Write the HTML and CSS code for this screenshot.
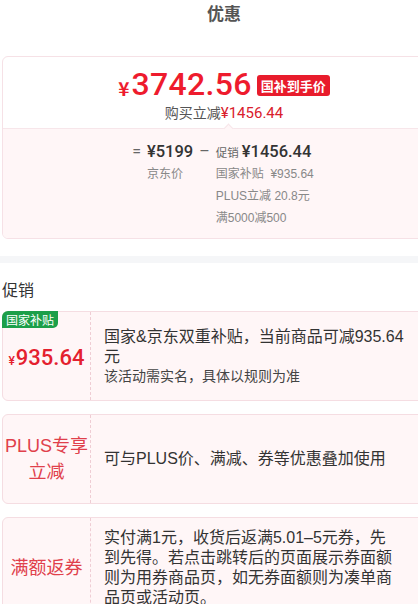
FILE: index.html
```html
<!DOCTYPE html>
<html lang="zh-CN">
<head>
<meta charset="utf-8">
<title>优惠</title>
<link rel="stylesheet" href="styles.css">
</head>
<body>
<div class="page">
  <div class="header">优惠</div>

  <div class="price-card">
    <div class="summary">
      <div class="final">
        <span class="yen">¥</span><span class="final-num">3742.56</span><span class="final-badge">国补到手价</span>
      </div>
      <div class="saving">购买立减<span class="saving-num">¥1456.44</span></div>
    </div>
    <div class="breakdown">
      <div class="calc">
        <span class="op">=</span>
        <div class="term">
          <div class="amount">¥5199</div>
          <div class="note">京东价</div>
        </div>
        <span class="op">–</span>
        <div class="term">
          <div class="amount"><span class="amount-tag">促销</span>¥1456.44</div>
          <div class="note">国家补贴&nbsp;&nbsp;¥935.64</div>
          <div class="note">PLUS立减 20.8元</div>
          <div class="note">满5000减500</div>
        </div>
      </div>
    </div>
  </div>

  <div class="divider"></div>

  <div class="section-title">促销</div>

  <div class="promo">
    <span class="promo-badge">国家补贴</span>
    <div class="promo-left">
      <span class="promo-price"><span class="promo-yen">¥</span>935.64</span>
    </div>
    <div class="promo-right">
      <div class="promo-text">国家&amp;京东双重补贴，当前商品可减935.64<br>元</div>
      <div class="promo-sub">该活动需实名，具体以规则为准</div>
    </div>
  </div>

  <div class="promo">
    <div class="promo-left">
      <span class="promo-label">PLUS专享<br>立减</span>
    </div>
    <div class="promo-right">
      <div class="promo-text">可与PLUS价、满减、券等优惠叠加使用</div>
    </div>
  </div>

  <div class="promo">
    <div class="promo-left">
      <span class="promo-label">满额返券</span>
    </div>
    <div class="promo-right">
      <div class="promo-text">实付满1元，收货后返满5.01–5元券，先<br>到先得。若点击跳转后的页面展示券面额<br>则为用券商品页，如无券面额则为凑单商<br>品页或活动页。</div>
    </div>
  </div>
</div>
</body>
</html>
```

FILE: styles.css
```css
html, body {
  margin: 0;
  padding: 0;
  background: #fff;
  overflow: hidden;
}

body {
  font-family: "Liberation Sans", "Noto Sans CJK SC", sans-serif;
  color: #333;
}

.page {
  width: 448px;
}

.header {
  height: 30px;
  line-height: 30px;
  text-align: center;
  font-size: 17px;
  font-weight: 700;
  color: #555;
}

.price-card {
  margin: 26px 2px 0;
  border: 1px solid #f6e1e6;
  border-radius: 6px;
  overflow: hidden;
}

.summary {
  padding: 9px 0 6px;
  text-align: center;
}

.final {
  height: 36px;
  display: flex;
  justify-content: center;
  align-items: center;
  color: #ee1b2d;
}

.yen {
  font-family: "Noto Sans CJK SC", sans-serif;
  font-size: 19px;
  font-weight: 700;
  margin-top: 6px;
  margin-right: 2px;
}

.final-num {
  font-family: Roboto, "Noto Sans", sans-serif;
  font-size: 32px;
  font-weight: 500;
  letter-spacing: 0.3px;
}

.final-badge {
  margin-left: 5px;
  margin-top: 3px;
  padding: 0 4px;
  height: 21px;
  line-height: 21px;
  border-radius: 3px;
  background: #e81c2c;
  color: #fff;
  font-family: "Noto Sans CJK SC", sans-serif;
  font-size: 13px;
  font-weight: 700;
}

.saving {
  height: 20px;
  line-height: 20px;
  font-family: "Noto Sans CJK SC", sans-serif;
  font-size: 14px;
  color: #555;
}

.saving-num {
  font-family: Roboto, sans-serif;
  color: #d9202c;
  font-size: 15px;
}

.breakdown {
  position: relative;
  background: #fff6f7;
  border-top: 1px solid #f7e6ea;
  padding: 12px 0 9px;
}

.breakdown::before {
  content: "";
  position: absolute;
  top: -4px;
  left: 222px;
  width: 6px;
  height: 6px;
  background: #fff6f7;
  border-top: 1px solid #f7e6ea;
  border-left: 1px solid #f7e6ea;
  transform: rotate(45deg);
}

.calc {
  display: flex;
  justify-content: center;
  align-items: flex-start;
  gap: 6px;
  padding-right: 2px;
}

.op {
  height: 22px;
  line-height: 22px;
  font-family: Roboto, sans-serif;
  font-size: 16px;
  color: #666;
}

.amount {
  height: 22px;
  line-height: 22px;
  font-family: Roboto, sans-serif;
  font-size: 16.5px;
  font-weight: 500;
  color: #333;
  white-space: nowrap;
}

.amount-tag {
  font-family: "Noto Sans CJK SC", sans-serif;
  font-size: 11.5px;
  font-weight: 400;
  color: #666;
  margin-right: 3px;
}

.note {
  height: 22px;
  line-height: 22px;
  font-family: "Liberation Sans", "Noto Sans CJK SC", sans-serif;
  font-size: 12px;
  color: #888;
  white-space: nowrap;
}

.divider {
  margin-top: 17px;
  height: 7px;
  background: #f5f6f8;
}

.section-title {
  margin: 14px 0 10px 2px;
  height: 24px;
  line-height: 24px;
  font-family: "Noto Sans CJK SC", sans-serif;
  font-size: 16px;
  color: #333;
}

.promo {
  position: relative;
  display: flex;
  min-height: 88px;
  margin: 0 2px 13px;
  border: 1px solid #f5dde2;
  border-radius: 6px;
  background: #fff6f7;
}

.promo-badge {
  position: absolute;
  top: -1px;
  left: -1px;
  height: 17px;
  line-height: 17px;
  padding: 0 4px;
  border-radius: 6px 0 5px 0;
  background: #1c9f49;
  color: #fff;
  font-family: "Noto Sans CJK SC", sans-serif;
  font-size: 12px;
}

.promo-left {
  flex: 0 0 87px;
  display: flex;
  align-items: center;
  justify-content: center;
  text-align: center;
  border-right: 1px dashed #efcdd4;
}

.promo-price {
  font-family: Roboto, sans-serif;
  font-size: 22px;
  font-weight: 500;
  color: #e4202e;
  margin-top: 2px;
}

.promo-yen {
  font-size: 12px;
  margin-right: 1px;
}

.promo-label {
  font-family: "Liberation Sans", "Noto Sans CJK SC", sans-serif;
  font-size: 18px;
  line-height: 26px;
  color: #e0404b;
}

.promo-right {
  flex: 1;
  display: flex;
  flex-direction: column;
  justify-content: center;
  padding: 10px 30px 10px 13px;
}

.promo-text {
  font-size: 16px;
  line-height: 20px;
  color: #333;
}

.promo-sub {
  font-size: 14px;
  line-height: 18px;
  color: #444;
}
```
